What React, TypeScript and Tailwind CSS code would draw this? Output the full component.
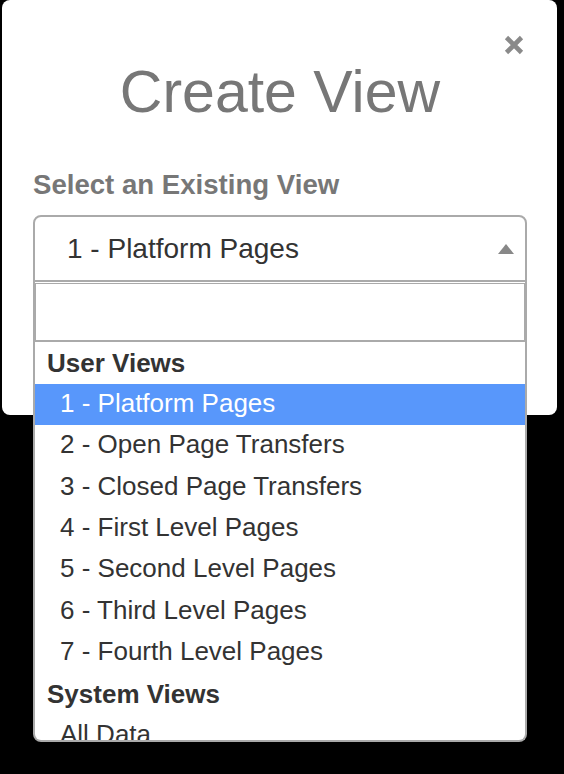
import React from "react";

const options = [
  "1 - Platform Pages",
  "2 - Open Page Transfers",
  "3 - Closed Page Transfers",
  "4 - First Level Pages",
  "5 - Second Level Pages",
  "6 - Third Level Pages",
  "7 - Fourth Level Pages",
];

export default function App() {
  return (
    <div
      className="w-[564px] h-[774px] bg-black overflow-hidden"
      style={{ fontFamily: '"Liberation Sans", Arial, sans-serif' }}
    >
      <div className="relative ml-[2px] w-[555px] h-[415px] bg-white rounded-[8px] pl-[31px] pr-[30px] pt-[62px]">
        <button className="absolute right-[33px] top-[35px] w-[20px] h-[20px]" aria-label="Close">
          <svg width="20" height="20" viewBox="0 0 20 20">
            <path d="M2.5 2.5 L17.5 17.5 M17.5 2.5 L2.5 17.5" stroke="#8a8a8a" strokeWidth="4.6" strokeLinecap="butt" />
          </svg>
        </button>
        <h1 className="text-center text-[59px] leading-[60px] h-[60px] text-[#777777] font-normal">
          Create View
        </h1>
        <div className="mt-[49px] text-[27.6px] leading-[28px] font-bold text-[#777777]">
          Select an Existing View
        </div>
        <div className="relative mt-[16px]">
          <div className="h-[67px] border-2 border-[#aaaaaa] rounded-t-[8px] flex items-center pl-[32px] pr-[11px]">
            <span className="flex-1 text-[28px] leading-[28px] text-[#333333]">1 - Platform Pages</span>
            <svg width="16" height="10" viewBox="0 0 16 10">
              <path d="M0 10 L8 0 L16 10 Z" fill="#888888" />
            </svg>
          </div>
          <div className="absolute left-0 top-full w-full h-[460px] bg-white border-2 border-t-0 border-[#aaaaaa] rounded-b-[8px] overflow-hidden">
            <div className="mt-[1px] h-[59px] border border-b-2 border-[#aaaaaa] bg-white" />
            <div className="text-[26px] text-[#333333]">
              <div className="h-[42px] flex items-center pl-[12px] font-bold leading-[26px]">User Views</div>
              {options.map((o, i) => (
                <div
                  key={o}
                  className={
                    i === 0
                      ? "h-[41.3px] flex items-center pl-[25px] pb-[3px] leading-[26px] bg-[#5897fb] text-white"
                      : "h-[41.3px] flex items-center pl-[25px] pb-[3px] leading-[26px]"
                  }
                >
                  {o}
                </div>
              ))}
              <div className="h-[42px] flex items-center pl-[12px] font-bold leading-[26px]">System Views</div>
              <div className="h-[41.3px] flex items-center pl-[25px] pb-[3px] leading-[26px]">All Data</div>
            </div>
          </div>
        </div>
      </div>
    </div>
  );
}
